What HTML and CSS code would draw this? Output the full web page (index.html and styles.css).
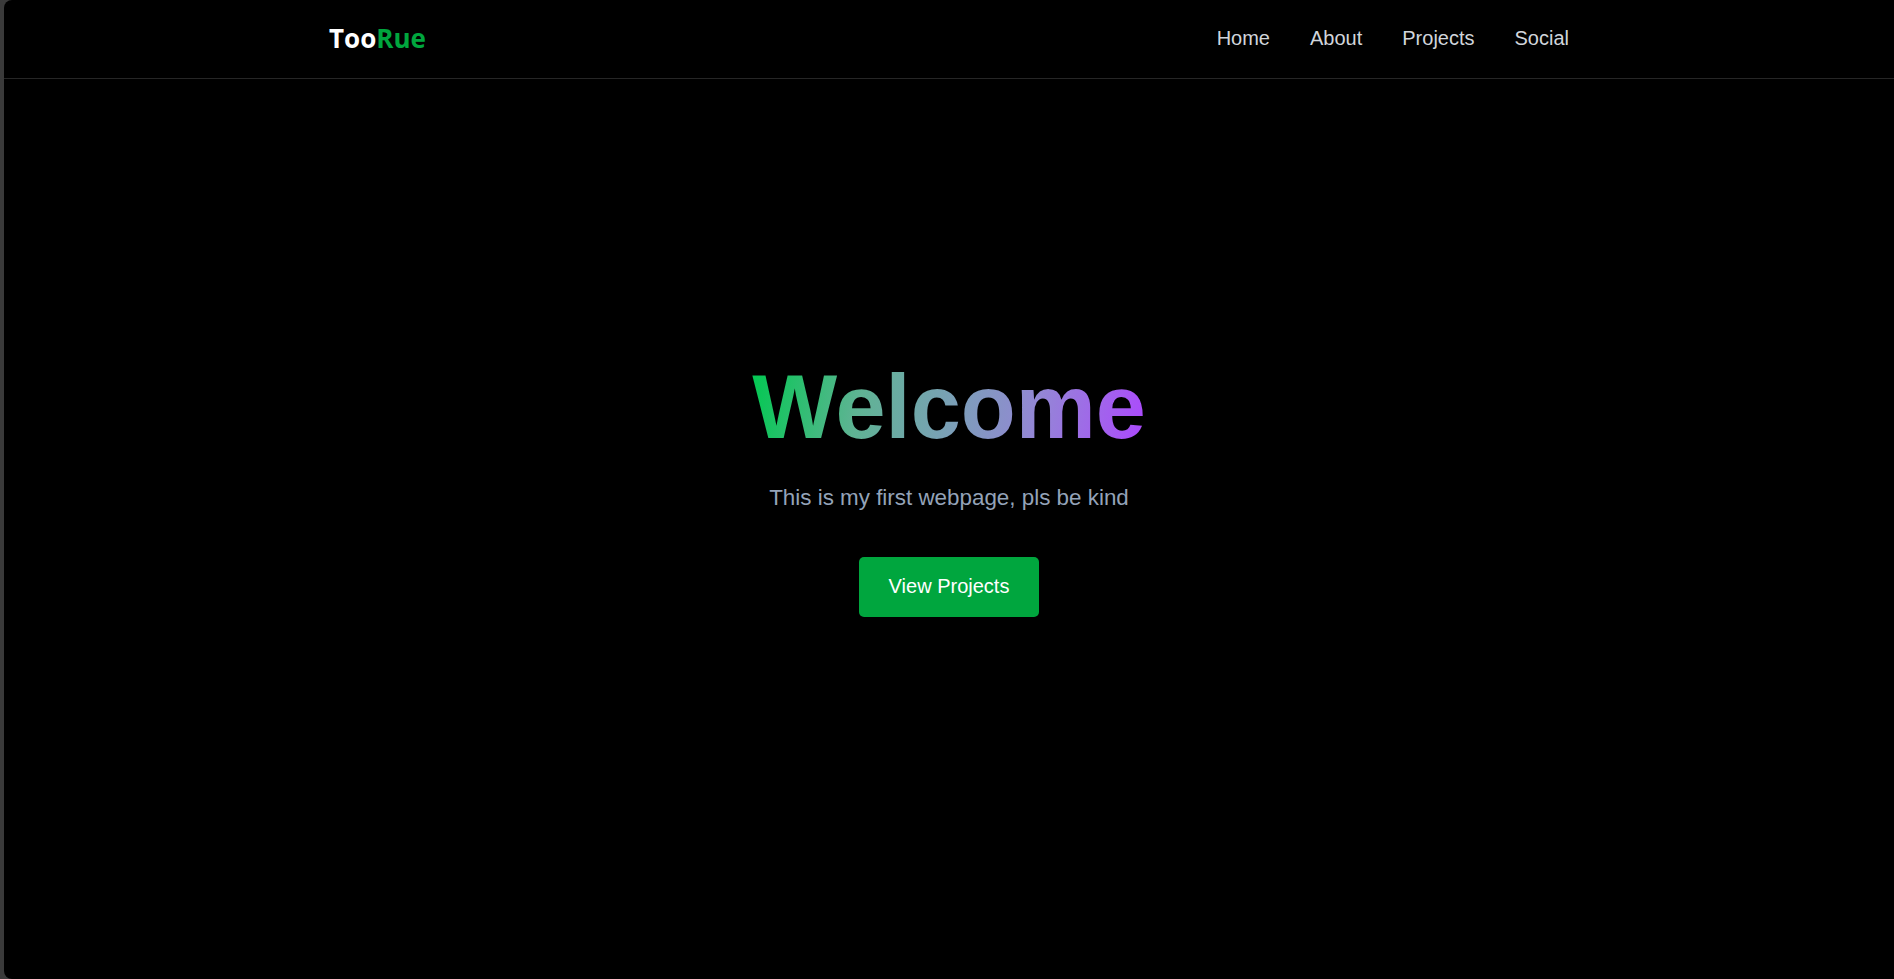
FILE: index.html
```html
<!DOCTYPE html>
<html lang="en">
<head>
<meta charset="utf-8">
<title>TooRue</title>
<link rel="stylesheet" href="styles.css">
</head>
<body>
<div class="window">
  <header class="site-header">
    <div class="container nav-row">
      <a class="logo" href="#">Too<span class="logo-accent">Rue</span></a>
      <nav class="nav">
        <a href="#">Home</a>
        <a href="#">About</a>
        <a href="#">Projects</a>
        <a href="#">Social</a>
      </nav>
    </div>
  </header>
  <main class="hero">
    <h1 class="hero-title">Welcome</h1>
    <p class="hero-sub">This is my first webpage, pls be kind</p>
    <a class="btn" href="#">View Projects</a>
  </main>
</div>
</body>
</html>
```

FILE: styles.css
```css
* { box-sizing: border-box; }

html, body {
  margin: 0;
  padding: 0;
  height: 100%;
}

body {
  background: #3a3a3a;
  font-family: "Liberation Sans", Arial, sans-serif;
  overflow: hidden;
}

.window {
  margin-left: 4px;
  height: 100%;
  background: #000;
  border-radius: 8px 0 0 8px;
  overflow: hidden;
}

.site-header {
  height: 79px;
  border-bottom: 1px solid #262626;
}

.container {
  max-width: 1240px;
  margin: 0 auto;
}

.nav-row {
  height: 78px;
  display: flex;
  align-items: center;
  justify-content: space-between;
}

.logo {
  font-family: "Open Sans", "Noto Sans", sans-serif;
  font-weight: 700;
  font-size: 26px;
  color: #ffffff;
  text-decoration: none;
  margin-bottom: 3px;
}

.logo-accent { color: #00a63e; }

.nav {
  display: flex;
  gap: 40px;
  padding-bottom: 2px;
}

.nav a {
  color: #d1d5db;
  text-decoration: none;
  font-size: 20px;
}

.hero {
  display: flex;
  flex-direction: column;
  align-items: center;
  padding-top: 277px;
}

.hero-title {
  margin: 0 0 26px;
  font-size: 90px;
  font-weight: 700;
  line-height: normal;
  background: linear-gradient(100deg, #00c950 0%, #5fb394 28%, #7aa1b6 50%, #9486d6 72%, #ad46ff 100%);
  -webkit-background-clip: text;
  background-clip: text;
  color: transparent;
}

.hero-sub {
  margin: 0 0 46px;
  font-size: 22.4px;
  color: #94a3b8;
}

.btn {
  display: inline-block;
  background: #00a63e;
  color: #fff;
  text-decoration: none;
  font-size: 20px;
  padding: 18px 30px 19px;
  border-radius: 5px;
}
```
